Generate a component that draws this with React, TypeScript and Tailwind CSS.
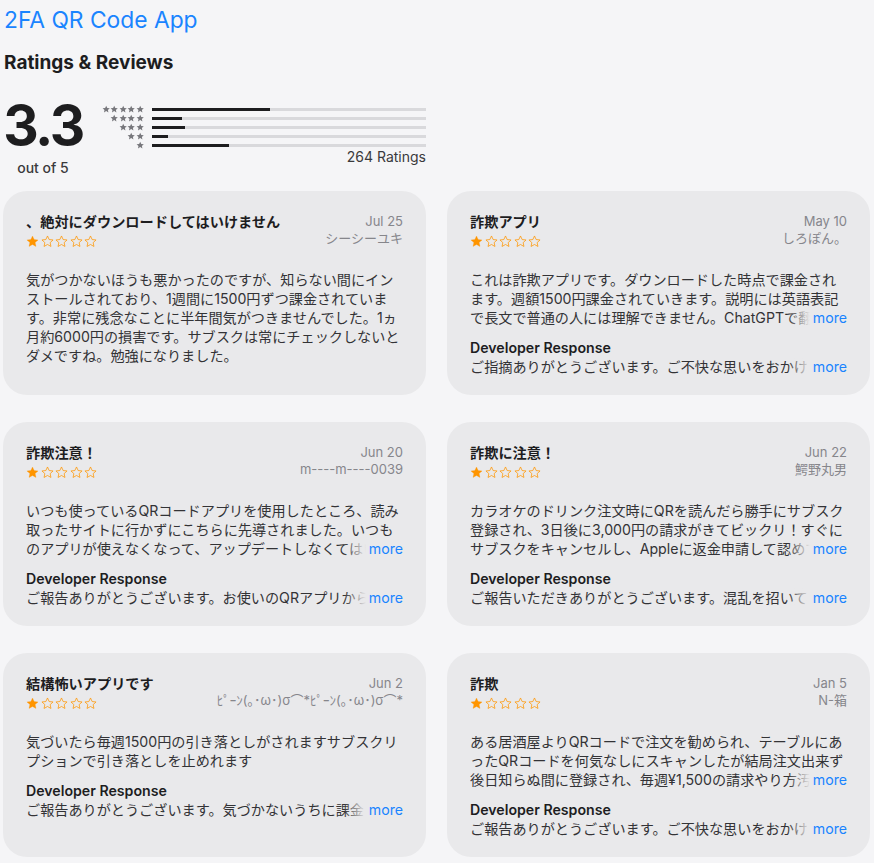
import { ReactNode } from 'react';

type Review = {
    title: string;
    date: string;
    author: string;
    body: string;
    clamp?: boolean;
    response?: string;
};

const reviews: Review[] = [
    {
        title: '、絶対にダウンロードしてはいけません',
        date: 'Jul 25',
        author: 'シーシーユキ',
        body: '気がつかないほうも悪かったのですが、知らない間にインストールされており、1週間に1500円ずつ課金されています。非常に残念なことに半年間気がつきませんでした。1ヵ月約6000円の損害です。サブスクは常にチェックしないとダメですね。勉強になりました。',
    },
    {
        title: '詐欺アプリ',
        date: 'May 10',
        author: 'しろぽん。',
        body: 'これは詐欺アプリです。ダウンロードした時点で課金されます。週額1500円課金されていきます。説明には英語表記で長文で普通の人には理解できません。ChatGPTで翻訳してみたところ、無料期間の後に自動で課金されると書いてありました。',
        clamp: true,
        response: 'ご指摘ありがとうございます。ご不快な思いをおかけしてしまい申し訳ございません。',
    },
    {
        title: '詐欺注意！',
        date: 'Jun 20',
        author: 'm----m----0039',
        body: 'いつも使っているQRコードアプリを使用したところ、読み取ったサイトに行かずにこちらに先導されました。いつものアプリが使えなくなって、アップデートしなくてはいけないのかと思いインストールしてしまいました。',
        clamp: true,
        response: 'ご報告ありがとうございます。お使いのQRアプリからの誘導については当社は関与しておりません。',
    },
    {
        title: '詐欺に注意！',
        date: 'Jun 22',
        author: '鰐野丸男',
        body: 'カラオケのドリンク注文時にQRを読んだら勝手にサブスク登録され、3日後に3,000円の請求がきてビックリ！すぐにサブスクをキャンセルし、Appleに返金申請して認めてもらいました。',
        clamp: true,
        response: 'ご報告いただきありがとうございます。混乱を招いてしまい申し訳ございません。',
    },
    {
        title: '結構怖いアプリです',
        date: 'Jun 2',
        author: 'ﾋﾟｰﾝ(｡･ω･)σ⌒*ﾋﾟｰﾝ(｡･ω･)σ⌒*',
        body: '気づいたら毎週1500円の引き落としがされますサブスクリプションで引き落としを止めれます',
        response: 'ご報告ありがとうございます。気づかないうちに課金されてしまったとのこと、申し訳ございません。',
    },
    {
        title: '詐欺',
        date: 'Jan 5',
        author: 'N-箱',
        body: 'ある居酒屋よりQRコードで注文を勧められ、テーブルにあったQRコードを何気なしにスキャンしたが結局注文出来ず後日知らぬ間に登録され、毎週¥1,500の請求やり方汚いです。',
        clamp: true,
        response: 'ご報告ありがとうございます。ご不快な思いをおかけしてしまい申し訳ございません。',
    },
];

// 5★ → 1★ share of the bar
const histogram = [43, 11, 12, 6, 28];

const STAR = 'M12 1.8l3.05 6.6 7.2.75-5.4 4.9 1.55 7.1L12 17.5l-6.4 3.65 1.55-7.1-5.4-4.9 7.2-.75z';

function SmallStar() {
    return (
        <svg viewBox="0 0 24 24" className="w-[8.4px] h-[8.4px]" fill="#77777c">
            <path d={STAR} />
        </svg>
    );
}

function RatingStars({ value }: { value: number }) {
    return (
        <div className="flex items-center gap-[1.6px] h-[21px]">
            {[0, 1, 2, 3, 4].map((i) => (
                <svg key={i} viewBox="0 0 24 24" className="w-[13px] h-[13px]">
                    <path
                        d={STAR}
                        fill={i < value ? '#ff9500' : 'none'}
                        stroke="#ff9500"
                        strokeWidth={i < value ? 0.5 : 1.4}
                        strokeLinejoin="round"
                    />
                </svg>
            ))}
        </div>
    );
}

function More() {
    return (
        <span className="absolute right-0 bottom-0 flex">
            <span className="w-[22px] bg-linear-to-r from-[#e9e9eb]/0 to-[#e9e9eb]" />
            <span className="bg-[#e9e9eb] pl-[3px] text-[#1a84ff]">more</span>
        </span>
    );
}

function Body({ clamp, children }: { clamp?: boolean; children: ReactNode }) {
    return (
        <div className="relative mt-[18px] text-[14.15px] leading-[19px] text-[#333336]">
            <p className={clamp ? 'line-clamp-3' : ''}>{children}</p>
            {clamp && <More />}
        </div>
    );
}

function ReviewCard({ r }: { r: Review }) {
    return (
        <div className="h-[204px] rounded-[24px] bg-[#e9e9eb] px-[23px] pt-[21px]">
            <div className="flex justify-between gap-3">
                <div className="min-w-0">
                    <div className="text-[14.2px] leading-[19px] font-semibold text-[#1d1d1f] whitespace-nowrap">
                        {r.title}
                    </div>
                    <RatingStars value={1} />
                </div>
                <div className="text-right text-[13px] leading-[17px] text-[#86868b] whitespace-nowrap pt-[1px]">
                    <div>{r.date}</div>
                    <div>{r.author}</div>
                </div>
            </div>
            <Body clamp={r.clamp}>{r.body}</Body>
            {r.response && (
                <div className="mt-[11px] text-[14.15px] leading-[19px]">
                    <div className="font-semibold text-[#1d1d1f]">Developer Response</div>
                    <div className="relative whitespace-nowrap overflow-hidden text-[#333336]">
                        {r.response}
                        <More />
                    </div>
                </div>
            )}
        </div>
    );
}

export default function App() {
    return (
        <div className="min-h-screen bg-[#f5f5f7] px-[3px] pb-6 font-['Inter','Noto_Sans_CJK_JP',sans-serif]">
            <h1 className="pt-[6px] pl-px text-[22.8px] leading-[28px] text-[#1a84ff]">2FA QR Code App</h1>
            <h2 className="mt-[17px] pl-px text-[19px] leading-[24px] font-bold text-[#1d1d1f]">Ratings &amp; Reviews</h2>

            <div className="flex w-[423px] mt-[22px]">
                <div className="w-[80px] flex flex-col items-center">
                    <div className="text-[55px] leading-[56px] font-bold tracking-[-2.5px] text-[#1d1d1f]">3.3</div>
                    <div className="mt-[6px] text-[14px] leading-[18px] font-medium text-[#3a3a3c]">out of 5</div>
                </div>
                <div className="flex-1 mt-[8px]">
                    <div className="flex flex-col">
                        {histogram.map((pct, i) => (
                            <div key={i} className="flex items-center h-[9px]">
                                <div className="w-[61px] flex justify-end">
                                    {Array.from({ length: 5 - i }).map((_, j) => (
                                        <SmallStar key={j} />
                                    ))}
                                </div>
                                <div className="ml-[8px] flex-1 h-[3px] bg-[#d9d9dc]">
                                    <div className="h-full bg-[#1d1d1f]" style={{ width: `${pct}%` }} />
                                </div>
                            </div>
                        ))}
                    </div>
                    <div className="text-right text-[14px] leading-[14px] text-[#3a3a3c]">264 Ratings</div>
                </div>
            </div>

            <div className="mt-[14px] grid grid-cols-2 gap-x-[21px] gap-y-[27px] w-[867px]">
                {reviews.map((r, i) => (
                    <ReviewCard key={i} r={r} />
                ))}
            </div>
        </div>
    );
}
